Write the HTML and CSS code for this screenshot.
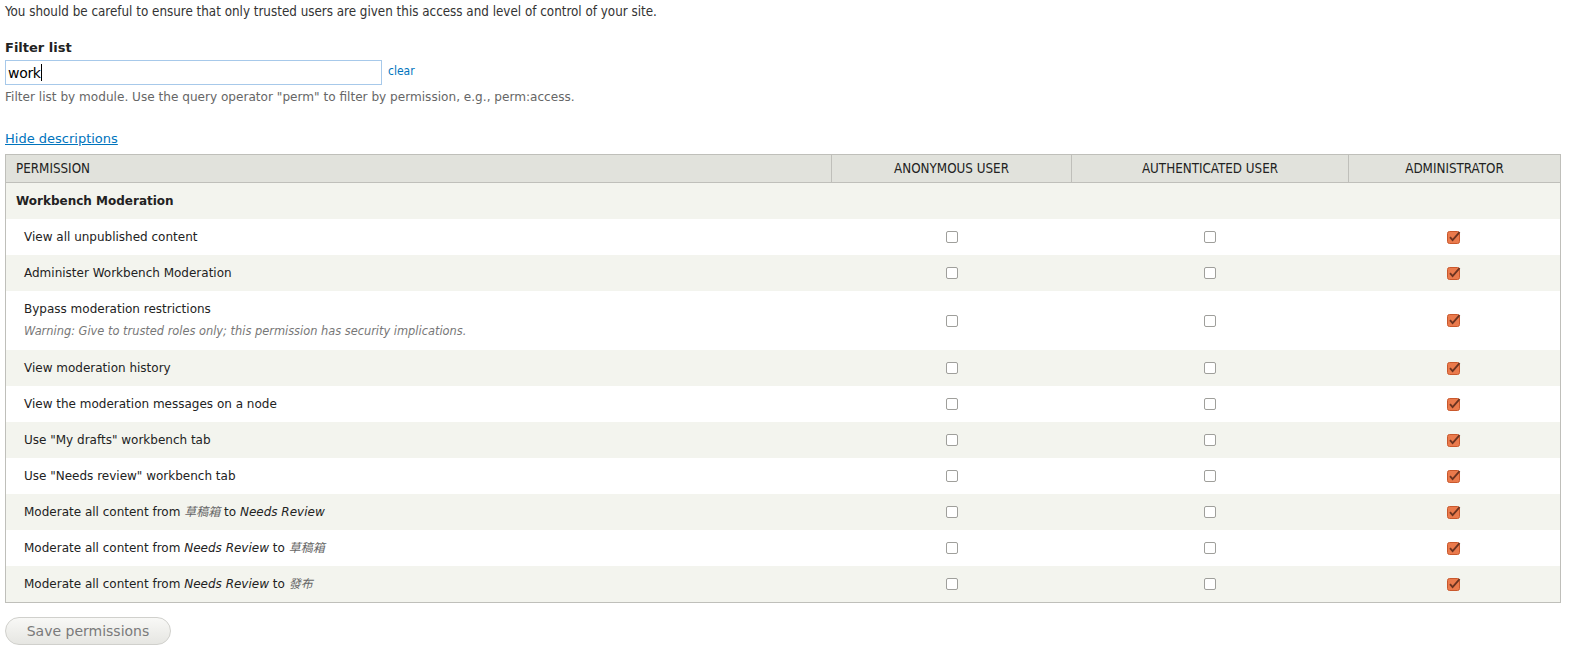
FILE: index.html
```html
<!DOCTYPE html>
<html lang="en">
<head>
    <meta charset="UTF-8">
    <title>Permissions</title>
    <link rel="stylesheet" href="styles.css">
</head>
<body>
    <p class="intro">You should be careful to ensure that only trusted users are given this access and level of control of your site.</p>

    <div class="filter">
        <label for="filter-input">Filter list</label>
        <div class="filter-row">
            <div class="filter-box">
                <span class="typed">work</span><span class="caret"></span>
            </div>
            <a href="#" class="clear-link">clear</a>
        </div>
        <p class="filter-help">Filter list by module. Use the query operator "perm" to filter by permission, e.g., perm:access.</p>
    </div>

    <a href="#" class="toggle-desc">Hide descriptions</a>

    <table class="perms">
        <thead>
            <tr>
                <th class="perm-col">Permission</th>
                <th class="role-col anon">Anonymous user</th>
                <th class="role-col auth">Authenticated user</th>
                <th class="role-col admin">Administrator</th>
            </tr>
        </thead>
        <tbody id="perm-body">
            <tr class="module-row">
                <td colspan="4">Workbench Moderation</td>
            </tr>
        </tbody>
    </table>

    <button class="save-btn">Save permissions</button>

    <script>
        const perms = [
            { name: "View all unpublished content" },
            { name: "Administer Workbench Moderation" },
            { name: "Bypass moderation restrictions", warning: "Warning: Give to trusted roles only; this permission has security implications." },
            { name: "View moderation history" },
            { name: "View the moderation messages on a node" },
            { name: 'Use "My drafts" workbench tab' },
            { name: 'Use "Needs review" workbench tab' },
            { name: 'Moderate all content from <em class="cjk">草稿箱</em> to <em>Needs Review</em>' },
            { name: 'Moderate all content from <em>Needs Review</em> to <em class="cjk">草稿箱</em>' },
            { name: 'Moderate all content from <em>Needs Review</em> to <em class="cjk">發布</em>' }
        ];

        const emptyBox = '<span class="box"></span>';
        const checkedBox = '<svg class="box-on" width="14" height="14" viewBox="0 0 14 14">' +
            '<rect x="0.5" y="1.5" width="12" height="12" rx="2" fill="#ea7a4c" stroke="#c9582c"/>' +
            '<path d="M3 7.2 L5.6 10.2 L12.6 2.2" fill="none" stroke="#6b3320" stroke-width="1.8"/>' +
            '</svg>';

        const body = document.getElementById("perm-body");
        perms.forEach((p) => {
            const tr = document.createElement("tr");
            let label = '<div class="perm-name">' + p.name + '</div>';
            if (p.warning) {
                label += '<div class="perm-warning">' + p.warning + '</div>';
            }
            tr.innerHTML = '<td class="perm-cell">' + label + '</td>' +
                '<td class="check-cell">' + emptyBox + '</td>' +
                '<td class="check-cell">' + emptyBox + '</td>' +
                '<td class="check-cell">' + checkedBox + '</td>';
            body.appendChild(tr);
        });
    </script>
</body>
</html>
```

FILE: styles.css
```css
body {
    margin: 0;
    padding: 0 14px 0 5px;
    font-family: "DejaVu Sans", Verdana, sans-serif;
    font-size: 12px;
    color: #222;
    background: #fff;
}

.intro {
    font-family: "DejaVu Sans Condensed", "DejaVu Sans", sans-serif;
    font-size: 13.3px;
    color: #333;
    margin: 4px 0 0;
    line-height: 16px;
}

.filter {
    margin-top: 20px;
}

.filter label {
    display: block;
    font-weight: bold;
    font-size: 13px;
    color: #222;
    line-height: 16px;
    margin-bottom: 4px;
}

.filter-row {
    display: flex;
    align-items: center;
    gap: 6px;
}

.filter-box {
    box-sizing: border-box;
    width: 377px;
    height: 25px;
    border: 1px solid #a7c9ea;
    display: flex;
    align-items: center;
    padding-left: 2px;
    font-size: 14px;
    letter-spacing: -0.3px;
    color: #000;
}

.caret {
    display: inline-block;
    width: 1px;
    height: 17px;
    background: #000;
}

.clear-link {
    font-family: "DejaVu Sans Condensed", "DejaVu Sans", sans-serif;
    color: #0074bd;
    text-decoration: none;
    font-size: 12px;
    margin-top: -4px;
}

.filter-help {
    margin: 5px 0 0;
    font-size: 12.1px;
    color: #666;
    line-height: 15px;
}

.toggle-desc {
    display: inline-block;
    margin-top: 26px;
    color: #0074bd;
    font-size: 13px;
    text-decoration: underline;
    line-height: 16px;
}

.perms {
    width: calc(100% + 4px);
    margin-top: 7px;
    border-collapse: collapse;
    border: 1px solid #bfbfba;
}

.perms th {
    background: #e1e2dc;
    border-bottom: 1px solid #bfbfba;
    border-left: 1px solid #bfbfba;
    font-family: "DejaVu Sans Condensed", "DejaVu Sans", sans-serif;
    font-weight: normal;
    font-size: 13.3px;
    text-transform: uppercase;
    height: 27px;
    padding: 0 10px;
    color: #222;
}

.perms th.perm-col {
    text-align: left;
    border-left: none;
}

.perms th.anon {
    width: 219px;
}

.perms th.auth {
    width: 256px;
}

.perms th.admin {
    width: 191px;
}

.module-row td {
    background: #f3f4ee;
    font-weight: bold;
    height: 36px;
    padding: 0 10px;
    box-sizing: border-box;
}

#perm-body tr:nth-child(odd):not(.module-row) td {
    background: #f3f4ee;
}

.perm-cell {
    padding: 10px 18px;
    height: 16px;
}

.perm-name {
    line-height: 16px;
    height: 16px;
}

.perm-name em {
    font-style: italic;
}

.perm-name em.cjk {
    font-family: "Noto Sans CJK TC", sans-serif;
    color: #666;
    line-height: 1;
}

.perm-warning {
    font-style: italic;
    font-size: 11.4px;
    color: #777;
    margin-top: 7px;
    margin-bottom: 2px;
    line-height: 14px;
}

.check-cell {
    text-align: center;
    vertical-align: middle;
}

.box {
    display: inline-block;
    box-sizing: border-box;
    width: 12px;
    height: 12px;
    border: 1px solid #9f9f9b;
    border-radius: 2px;
    background: #fff;
    vertical-align: middle;
}

.box-on {
    vertical-align: middle;
}

.save-btn {
    margin-top: 14px;
    font-family: "DejaVu Sans", sans-serif;
    font-size: 14px;
    color: #7a7a7a;
    background: linear-gradient(#f8f8f6, #e6e6e2);
    border: 1px solid #d0d0cc;
    border-radius: 14px;
    padding: 0 20px;
    height: 28px;
    width: 166px;
}
```
